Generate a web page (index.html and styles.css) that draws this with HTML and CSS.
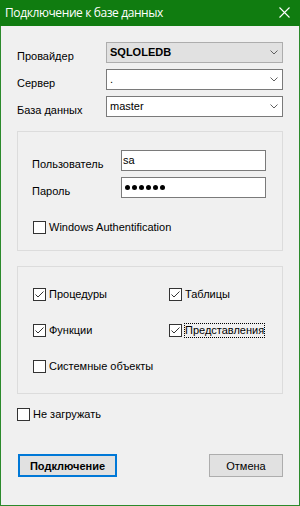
FILE: index.html
```html
<!DOCTYPE html>
<html lang="ru">
<head>
<meta charset="utf-8">
<title>Подключение к базе данных</title>
<link rel="stylesheet" href="styles.css">
</head>
<body>
<div class="window">
  <div class="titlebar">
    <span class="title">Подключение к базе данных</span>
    <svg class="close" width="11" height="11" viewBox="0 0 11 11"><path d="M0.5 0.5 L10.5 10.5 M10.5 0.5 L0.5 10.5" stroke="#fff" stroke-width="1.1" fill="none"/></svg>
  </div>
  <div class="content">
    <div class="fields">
      <span class="lbl">Провайдер</span>
      <div class="combo combo-ro"><span class="val bold">SQLOLEDB</span><svg class="chev" width="8" height="5" viewBox="0 0 8 5"><path d="M0.5 0.5 L4 4 L7.5 0.5" stroke="#606060" fill="none"/></svg></div>
      <span class="lbl">Сервер</span>
      <div class="combo"><span class="val">.</span><svg class="chev" width="8" height="5" viewBox="0 0 8 5"><path d="M0.5 0.5 L4 4 L7.5 0.5" stroke="#606060" fill="none"/></svg></div>
      <span class="lbl">База данных</span>
      <div class="combo"><span class="val">master</span><svg class="chev" width="8" height="5" viewBox="0 0 8 5"><path d="M0.5 0.5 L4 4 L7.5 0.5" stroke="#606060" fill="none"/></svg></div>
    </div>

    <div class="group group-auth">
      <div class="auth-fields">
        <span class="lbl">Пользователь</span>
        <div class="textbox"><span class="val">sa</span></div>
        <span class="lbl">Пароль</span>
        <div class="textbox pwd"><span class="dot"></span><span class="dot"></span><span class="dot"></span><span class="dot"></span><span class="dot"></span><span class="dot"></span></div>
      </div>
      <label class="check check-auth">
        <span class="box"></span><span class="ctext">Windows Authentification</span>
      </label>
    </div>

    <div class="group group-objects">
      <label class="check"><span class="box"><svg width="11" height="11" viewBox="0 0 11 11"><path d="M1.5 5.5 L4 8 L9.5 2.5" stroke="#333" stroke-width="1" fill="none"/></svg></span><span class="ctext">Процедуры</span></label>
      <label class="check"><span class="box"><svg width="11" height="11" viewBox="0 0 11 11"><path d="M1.5 5.5 L4 8 L9.5 2.5" stroke="#333" stroke-width="1" fill="none"/></svg></span><span class="ctext">Таблицы</span></label>
      <label class="check"><span class="box"><svg width="11" height="11" viewBox="0 0 11 11"><path d="M1.5 5.5 L4 8 L9.5 2.5" stroke="#333" stroke-width="1" fill="none"/></svg></span><span class="ctext">Функции</span></label>
      <label class="check"><span class="box"><svg width="11" height="11" viewBox="0 0 11 11"><path d="M1.5 5.5 L4 8 L9.5 2.5" stroke="#333" stroke-width="1" fill="none"/></svg></span><span class="ctext focus">Представления</span></label>
      <label class="check"><span class="box"></span><span class="ctext">Системные объекты</span></label>
    </div>

    <label class="check check-skip"><span class="box"></span><span class="ctext">Не загружать</span></label>

    <div class="buttons">
      <button class="btn btn-primary">Подключение</button>
      <button class="btn">Отмена</button>
    </div>
  </div>
</div>
</body>
</html>
```

FILE: styles.css
```css
* { box-sizing: border-box; }

body {
  margin: 0;
  background: #f0f0f0;
  font-family: "Liberation Sans", Arial, sans-serif;
  font-size: 11px;
  color: #000;
}

.window {
  width: 300px;
  height: 506px;
  display: flex;
  flex-direction: column;
}

.titlebar {
  height: 26px;
  flex: none;
  background: #107c10;
  color: #fff;
  display: flex;
  align-items: center;
  justify-content: space-between;
  padding: 0 10px 0 5px;
  font-family: "Open Sans", "Noto Sans", sans-serif;
  font-size: 12px;
  letter-spacing: -0.4px;
}

.title { line-height: 16px; }

.close { display: block; margin-top: -1px; }

.content {
  flex: 1;
  border: 1px solid #2b8a2b;
  border-top: 0;
  padding: 16px 16px 0 16px;
  display: flex;
  flex-direction: column;
}

.fields {
  display: grid;
  grid-template-columns: 89px 177px;
  grid-auto-rows: 21px;
  row-gap: 6px;
}

.lbl {
  padding-top: 8px;
  line-height: 13px;
  white-space: nowrap;
}

.combo {
  display: flex;
  align-items: center;
  justify-content: space-between;
  background: #fff;
  border: 1px solid #7a7a7a;
  padding: 0 4px 0 3px;
  line-height: 13px;
}

.combo-ro {
  background: #e1e1e1;
  border-color: #adadad;
}

.bold { font-weight: bold; }

.chev { display: block; }

.group {
  border: 1px solid #dcdcdc;
}

.group-auth {
  margin-top: 14px;
  height: 120px;
  padding: 18px 0 0 14px;
}

.auth-fields {
  display: grid;
  grid-template-columns: 89px 145px;
  grid-auto-rows: 21px;
  row-gap: 6px;
}

.textbox {
  display: flex;
  align-items: center;
  background: #fff;
  border: 1px solid #7a7a7a;
  padding: 0 1px;
  line-height: 13px;
}

.pwd {
  padding-left: 3px;
  gap: 2px;
}

.dot {
  width: 5px;
  height: 5px;
  border-radius: 50%;
  background: #000;
}

.check {
  display: flex;
  align-items: center;
  height: 13px;
  line-height: 13px;
  white-space: nowrap;
}

.box {
  width: 13px;
  height: 13px;
  flex: none;
  border: 1px solid #333;
  background: #fff;
  margin-right: 3px;
}

.box svg { display: block; }

.focus {
  outline: 1px dotted #000;
}

.check-auth {
  margin-top: 23px;
  margin-left: 1px;
}

.group-objects {
  margin-top: 15px;
  height: 128px;
  padding: 21px 0 0 15px;
  display: grid;
  grid-template-columns: 136px auto;
  grid-auto-rows: 13px;
  row-gap: 23px;
  align-content: start;
}

.check-skip {
  margin-top: 14px;
}

.buttons {
  margin-top: 33px;
  display: flex;
  justify-content: space-between;
}

.btn {
  height: 23px;
  background: #e1e1e1;
  border: 1px solid #adadad;
  font-family: "Liberation Sans", Arial, sans-serif;
  font-size: 11px;
  color: #000;
  padding: 0;
  width: 74px;
}

.btn-primary {
  width: 99px;
  margin-left: 1px;
  border: 2px solid #0078d7;
  font-weight: bold;
}
```
